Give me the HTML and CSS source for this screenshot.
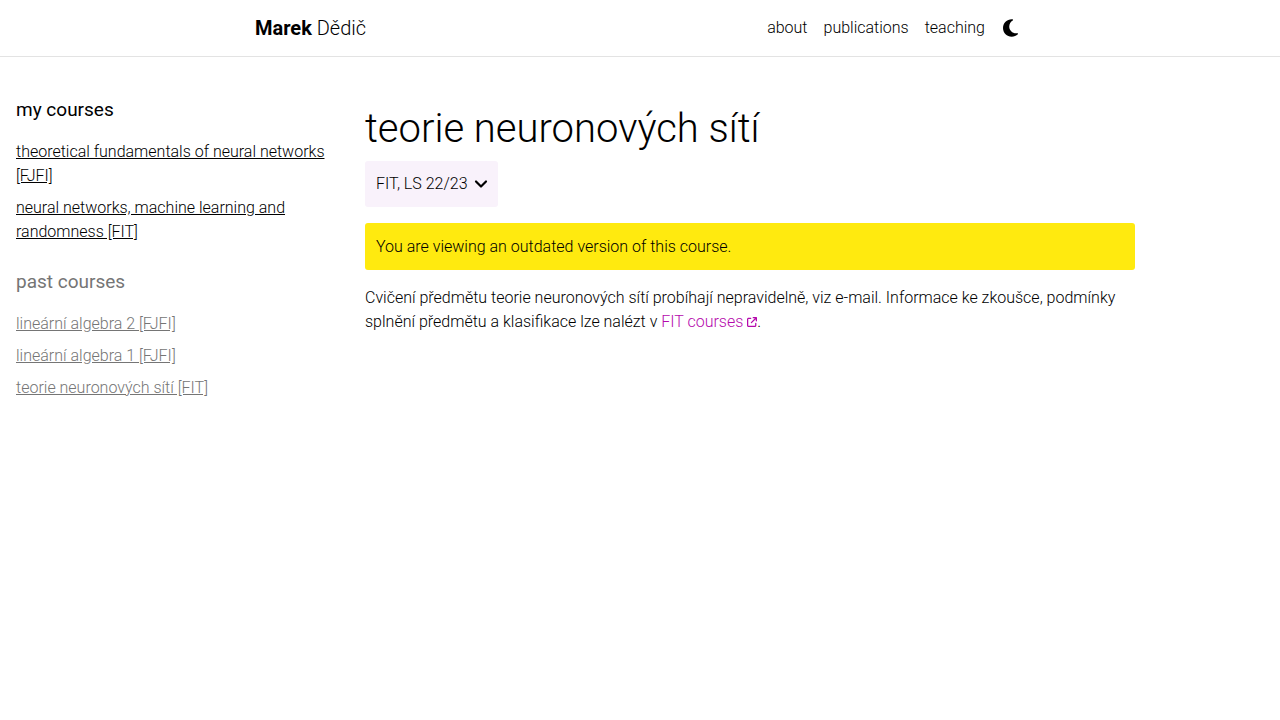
FILE: index.html
```html
<!DOCTYPE html>
<html lang="cs">
<head>
<meta charset="utf-8">
<meta name="viewport" content="width=device-width, initial-scale=1">
<title>teorie neuronových sítí</title>
<link rel="stylesheet" href="styles.css">
</head>
<body>
<header class="site-header">
  <nav class="navbar">
    <a class="brand" href="#"><strong>Marek</strong> Dědič</a>
    <div class="nav-links">
      <a href="#">about</a>
      <a href="#">publications</a>
      <a href="#">teaching</a>
      <button class="theme-toggle" type="button" aria-label="dark mode">
        <svg viewBox="0 0 384 512" width="15" height="20" aria-hidden="true"><path d="M223.500 32C100 32 0 132.300 0 256S100 480 223.500 480c60.600 0 115.500-24.200 155.800-63.400c5-4.900 6.300-12.500 3.100-18.700s-10.100-9.700-17-8.500c-9.800 1.700-19.800 2.600-30.100 2.600c-96.900 0-175.500-78.800-175.500-176c0-65.800 36-123.100 89.300-153.300c6.100-3.500 9.200-10.500 7.700-17.300s-7.300-11.900-14.300-12.500c-6.300-.5-12.600-.8-19-.8z"/></svg>
      </button>
    </div>
  </nav>
</header>
<div class="layout">
  <aside class="sidebar">
    <h2>my courses</h2>
    <ul>
      <li><a href="#">theoretical fundamentals of neural networks [FJFI]</a></li>
      <li><a href="#">neural networks, machine learning and randomness [FIT]</a></li>
    </ul>
    <section class="past">
      <h2>past courses</h2>
      <ul>
        <li><a href="#">lineární algebra 2 [FJFI]</a></li>
        <li><a href="#">lineární algebra 1 [FJFI]</a></li>
        <li><a href="#">teorie neuronových sítí [FIT]</a></li>
      </ul>
    </section>
  </aside>
  <main class="content">
    <h1>teorie neuronových sítí</h1>
    <button class="version" type="button" aria-haspopup="true">FIT, LS 22/23
      <svg class="chevron" viewBox="0 0 14 16" width="14" height="16" aria-hidden="true"><path d="M2 5.500l5 5 5-5"/></svg>
    </button>
    <div class="notice" role="alert">You are viewing an outdated version of this course.</div>
    <p>Cvičení předmětu teorie neuronových sítí probíhají nepravidelně, viz e-mail. Informace ke zkoušce, podmínky splnění předmětu a klasifikace lze nalézt v <a class="external" href="#">FIT courses <svg viewBox="0 0 512 512" width="10" height="10" aria-hidden="true"><path d="M320 0c-17.700 0-32 14.300-32 32s14.300 32 32 32h82.700L201.400 265.400c-12.500 12.500-12.500 32.800 0 45.300s32.800 12.500 45.300 0L448 109.300V192c0 17.700 14.300 32 32 32s32-14.300 32-32V32c0-17.700-14.300-32-32-32H320zM80 32C35.800 32 0 67.800 0 112v320c0 44.200 35.800 80 80 80h320c44.200 0 80-35.800 80-80V320c0-17.700-14.300-32-32-32s-32 14.300-32 32v112c0 8.800-7.200 16-16 16H80c-8.800 0-16-7.200-16-16V112c0-8.800 7.200-16 16-16h112c17.700 0 32-14.300 32-32s-14.300-32-32-32H80z"/></svg></a>.</p>
  </main>
</div>
</body>
</html>
```
FILE: styles.css
```css
*, *::before, *::after { box-sizing: border-box; }
body {
  margin: 0;
  background: #fff;
  color: #000;
  font: 300 16px/24px Roboto, sans-serif;
}
a { color: inherit; }
h1, h2, p, ul { margin: 0; padding: 0; }
svg { fill: currentColor; }
.site-header { border-bottom: 1px solid #e3e3e3; }
.navbar {
  display: flex;
  align-items: center;
  justify-content: space-between;
  max-width: 800px;
  height: 56px;
  margin: 0 auto;
  padding: 0 15px;
}
.navbar a { text-decoration: none; }
.brand { font-size: 20px; }
.brand strong { font-weight: 700; }
.nav-links { display: flex; align-items: center; gap: 16px; }
.theme-toggle {
  display: flex;
  padding: 0 7px 0 2px;
  border: 0;
  background: none;
  color: inherit;
}
.layout {
  display: grid;
  grid-template-columns: 350px minmax(0, 770px);
  column-gap: 15px;
  padding-right: 15px;
}
.sidebar { padding: 41px 16px 0; }
.sidebar h2 {
  margin-bottom: 18px;
  font-size: 19px;
  font-weight: 400;
  line-height: 24px;
}
.sidebar ul { list-style: none; }
.sidebar li { margin-bottom: 8px; }
.past { margin-top: 26px; color: #757575; }
.content { padding: 48px 0 24px; }
.content h1 {
  margin-bottom: 8px;
  font-size: 40px;
  font-weight: 300;
  line-height: 48px;
}
.version {
  display: flex;
  align-items: center;
  gap: 6px;
  padding: 11px 10px 11px 11px;
  border: 0;
  border-radius: 3px;
  background: #f9f2fb;
  color: inherit;
  font: inherit;
}
.chevron {
  fill: none;
  stroke: currentColor;
  stroke-width: 2.2;
  stroke-linecap: round;
  stroke-linejoin: round;
}
.notice {
  margin: 16px 0;
  padding: 12px 11px 11px;
  border-radius: 3px;
  background: #ffea0f;
}
.external { color: #b509ac; text-decoration: none; }
```
